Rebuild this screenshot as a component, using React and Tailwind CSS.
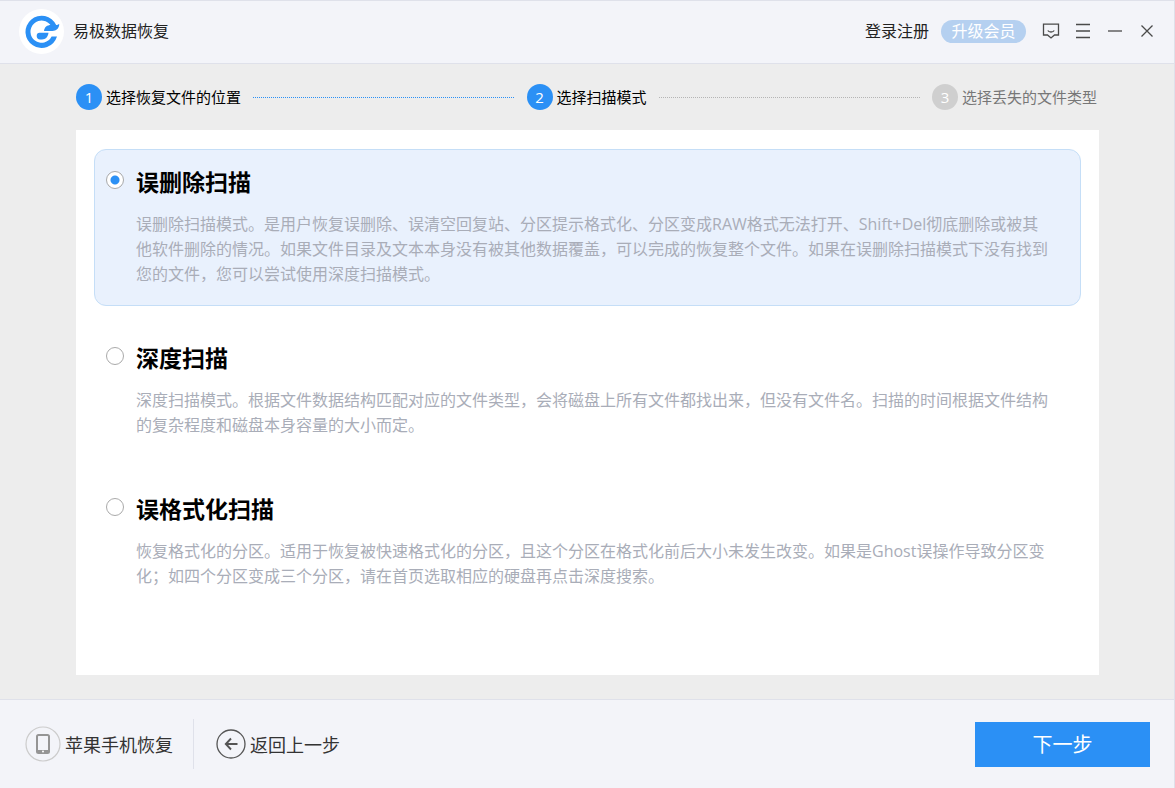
import { useState } from 'react'

const STEPS = [
  {
    label: '选择恢复文件的位置',
    badge: 'bg-[#2b90f5]',
    text: 'text-black',
    line: 'bg-[repeating-linear-gradient(90deg,#2b90f5_0px,#2b90f5_1px,transparent_1px,transparent_2px)]',
  },
  {
    label: '选择扫描模式',
    badge: 'bg-[#2b90f5]',
    text: 'text-black',
    line: 'bg-[repeating-linear-gradient(90deg,#b5b5b5_0px,#b5b5b5_1px,transparent_1px,transparent_2px)]',
  },
  { label: '选择丢失的文件类型', badge: 'bg-[#cfcfcf]', text: 'text-[#777]', line: null },
]

const MODES = [
  {
    id: 'deleted',
    title: '误删除扫描',
    text: '误删除扫描模式。是用户恢复误删除、误清空回复站、分区提示格式化、分区变成RAW格式无法打开、Shift+Del彻底删除或被其他软件删除的情况。如果文件目录及文本本身没有被其他数据覆盖，可以完成的恢复整个文件。如果在误删除扫描模式下没有找到您的文件，您可以尝试使用深度扫描模式。',
  },
  {
    id: 'deep',
    title: '深度扫描',
    text: '深度扫描模式。根据文件数据结构匹配对应的文件类型，会将磁盘上所有文件都找出来，但没有文件名。扫描的时间根据文件结构的复杂程度和磁盘本身容量的大小而定。',
  },
  {
    id: 'formatted',
    title: '误格式化扫描',
    text: '恢复格式化的分区。适用于恢复被快速格式化的分区，且这个分区在格式化前后大小未发生改变。如果是Ghost误操作导致分区变化；如四个分区变成三个分区，请在首页选取相应的硬盘再点击深度搜索。',
  },
]

function Logo() {
  return (
    <svg viewBox="0 0 45 45" className="h-[45px] w-[45px]" aria-hidden="true">
      <circle cx="22.5" cy="22.5" r="22.5" fill="#fff" />
      <g fill="#2b90f5">
        <path d="M38 27.5 H32.6 A11.1 11.1 0 1 1 32.1 17 L37.2 16 A16.1 16.1 0 1 0 38 27.5 Z" />
        <path d="M25 22 C25.5 18 28 16 32 16 H37 C38.5 16 39.5 15 40.3 15.3 C39.8 20 37 22 33.5 22 Z" />
        <path d="M20.5 23.8 H29.5 C29 28 26.5 30.5 23 30.5 H21 C19 30.5 17.7 29 17.7 27 C17.7 25 18.7 23.8 20.5 23.8 Z" />
      </g>
    </svg>
  )
}

function WindowButton({ label, children }) {
  return (
    <button type="button" aria-label={label} className="flex h-8 w-8 items-center justify-center">
      <svg viewBox="0 0 18 18" className="h-[18px] w-[18px]" fill="none" stroke="#4a4a4a" strokeWidth="1.3">
        {children}
      </svg>
    </button>
  )
}

function Header() {
  return (
    <header className="flex h-16 items-center border-t border-b border-[#dfe1ea] bg-[#f3f4f9] pr-[11px] pb-[2px] pl-[19px]">
      <Logo />
      <h1 className="ml-[9px] text-[16px] text-[#222]">易极数据恢复</h1>
      <a href="#login" className="ml-auto text-[16px] text-[#222]">登录注册</a>
      <button type="button" className="mr-[9px] ml-3 h-[23px] w-[85px] rounded-full bg-[#b5d0f0] text-[16px] leading-[23px] text-white">
        升级会员
      </button>
      <WindowButton label="消息">
        <path d="M1.5 2.2 H16.5 V13 H12.5 L9 16 L5.5 13 H1.5 Z" />
        <path d="M5.8 8.5 C7 10.5 11 10.5 12.2 8.5" />
      </WindowButton>
      <WindowButton label="菜单">
        <path d="M2 2.5 H16 M2 9 H16 M2 15.5 H16" />
      </WindowButton>
      <WindowButton label="最小化">
        <path d="M2 9 H16" />
      </WindowButton>
      <WindowButton label="关闭">
        <path d="M3.5 3.5 L14.5 14.5 M14.5 3.5 L3.5 14.5" />
      </WindowButton>
    </header>
  )
}

function Steps() {
  return (
    <ol className="flex h-[66px] items-center pr-[2px]">
      {STEPS.map((step, i) => (
        <li key={step.label} className={step.line ? 'flex flex-auto items-center' : 'flex items-center'}>
          <span className={`flex h-[26px] w-[26px] items-center justify-center rounded-full text-[15px] text-white ${step.badge}`}>
            {i + 1}
          </span>
          <span className={`ml-1 text-[15px] ${step.text}`}>{step.label}</span>
          {step.line && <span className={`mx-3 h-px flex-1 ${step.line}`} />}
        </li>
      ))}
    </ol>
  )
}

function ModeOption({ mode, checked, onSelect }) {
  return (
    <label
      className={`flex items-start gap-3 rounded-xl border pt-4 pr-[29px] pb-[18px] pl-[11px] ${checked ? 'border-[#c5def7] bg-[#e9f1fd]' : 'border-transparent'}`}
    >
      <input
        type="radio"
        name="mode"
        value={mode.id}
        checked={checked}
        onChange={() => onSelect(mode.id)}
        className="mt-[5px] h-[18px] w-[18px] shrink-0 appearance-none rounded-full border border-[#aaa] bg-white bg-clip-padding checked:bg-[radial-gradient(circle,#2b90f5_4px,#fff_5px)]"
      />
      <span className="flex-1">
        <span className="block text-[23px] leading-[32px] font-bold text-black">{mode.title}</span>
        <span className="mt-[14px] block text-[16px] leading-[25px] text-[#a9adb8]">{mode.text}</span>
      </span>
    </label>
  )
}

function Footer() {
  return (
    <footer className="flex h-[89px] items-center border-t border-[#dfe1ea] bg-[#f3f4f9] pr-6 pl-[25px]">
      <button type="button" className="flex items-center gap-1 text-[18px] text-[#333]">
        <svg viewBox="0 0 36 36" className="h-9 w-9" fill="none" aria-hidden="true">
          <circle cx="18" cy="18" r="17" stroke="#ccc" strokeWidth="1.2" />
          <rect x="12" y="9" width="12" height="18" rx="1.5" stroke="#959595" strokeWidth="2" />
          <path d="M12 25.5 H24" stroke="#959595" strokeWidth="3" />
          <circle cx="18" cy="25.5" r="1" fill="#fff" />
        </svg>
        <span className="pt-[2px]">苹果手机恢复</span>
      </button>
      <span className="mr-[22px] ml-5 h-[50px] w-px bg-[#dfe1ea]" />
      <button type="button" className="flex items-center gap-1 text-[18px] text-[#333]">
        <svg viewBox="0 0 30 30" className="h-[30px] w-[30px]" fill="none" stroke="#555" aria-hidden="true">
          <circle cx="15" cy="15" r="14" strokeWidth="1.3" />
          <path d="M21.5 15 H10 M15 9.5 L9.8 15 L15 20.5" strokeWidth="1.9" />
        </svg>
        <span className="pt-[2px]">返回上一步</span>
      </button>
      <button type="button" className="ml-auto h-[45px] w-[175px] bg-[#2b90f5] pt-[2px] text-[20px] text-white">
        下一步
      </button>
    </footer>
  )
}

export default function App() {
  const [mode, setMode] = useState('deleted')

  return (
    <div className="flex min-h-screen flex-col border-r border-[#dfe1ea] bg-[#ededed] font-['Open_Sans','Noto_Sans_CJK_SC',sans-serif]">
      <Header />
      <main className="flex flex-1 flex-col pr-[75px] pb-6 pl-[76px]">
        <Steps />
        <div role="radiogroup" aria-label="选择扫描模式" className="flex flex-1 flex-col gap-[19px] bg-white px-[18px] py-[19px]">
          {MODES.map((m) => (
            <ModeOption key={m.id} mode={m} checked={m.id === mode} onSelect={setMode} />
          ))}
        </div>
      </main>
      <Footer />
    </div>
  )
}
